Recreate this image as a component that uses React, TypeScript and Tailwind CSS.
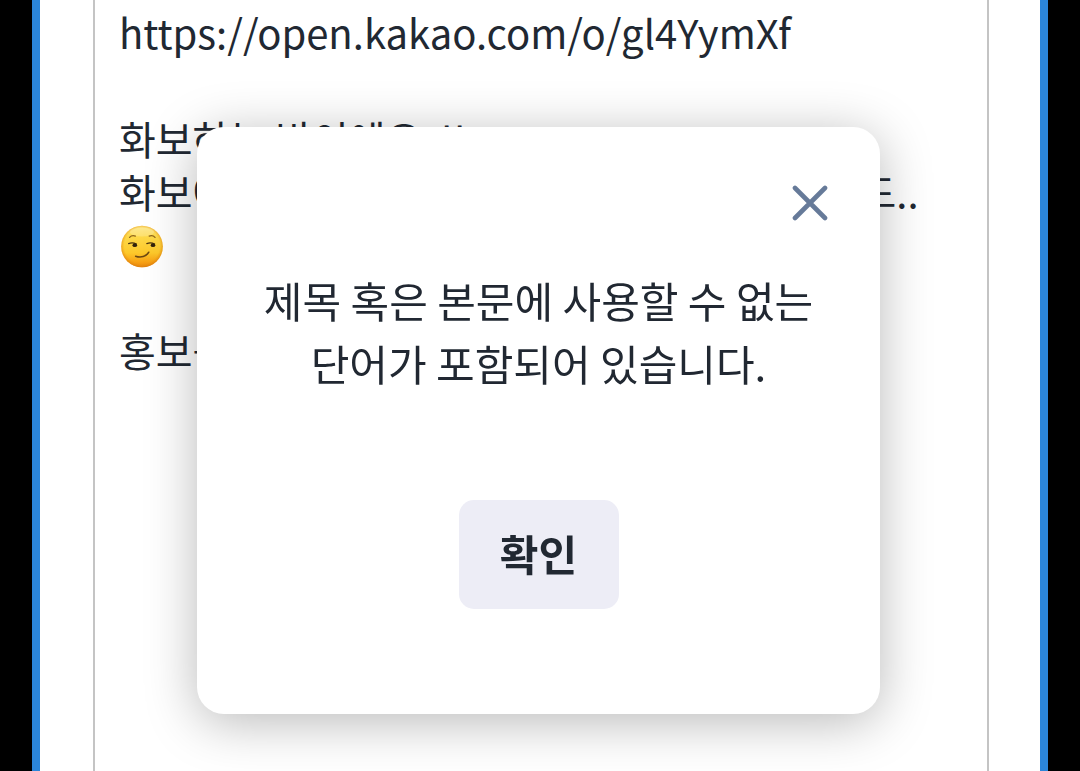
import { useState } from "react";

const SmirkEmoji = () => (
  <svg
    viewBox="0 0 42 43"
    role="img"
    aria-label="smirking face"
    className="inline-block w-[42px] h-[43px] ml-0.5 mt-[7px] align-top"
  >
    <defs>
      <linearGradient id="face" x1="0" y1="0" x2="0" y2="1">
        <stop offset="0" stopColor="#fde57c" />
        <stop offset="0.25" stopColor="#fdd94a" />
        <stop offset="0.65" stopColor="#fdc92b" />
        <stop offset="0.88" stopColor="#f7a014" />
        <stop offset="1" stopColor="#e8860e" />
      </linearGradient>
      <radialGradient id="edge" cx="0.5" cy="0.48" r="0.53">
        <stop offset="0.8" stopColor="#ee9a12" stopOpacity="0" />
        <stop offset="1" stopColor="#d9780a" stopOpacity="0.8" />
      </radialGradient>
    </defs>
    <circle cx="21" cy="21.5" r="20.8" fill="url(#face)" />
    <circle cx="21" cy="21.5" r="20.8" fill="url(#edge)" />
    <ellipse cx="21" cy="7" rx="12" ry="4.5" fill="#fff" opacity="0.2" />
    <g fill="none" strokeLinecap="round">
      <path d="M8.6 12.4c1.5-1.7 3.6-2.1 5.8-1.3" stroke="#8d641c" strokeWidth="1.3" />
      <path d="M28.2 11.1c2.2-.8 4.3-.4 5.8 1.3" stroke="#8d641c" strokeWidth="1.3" />
      <path d="M7.6 18.6c2.6-1 5.4-.8 7.8.4" stroke="#4b3410" strokeWidth="1.2" />
      <path d="M25.8 18.6c2.6-1 5.4-.8 7.8.4" stroke="#4b3410" strokeWidth="1.2" />
      <path d="M14.6 31.2c5.2 1.9 10.7.4 13.2-4" stroke="#6b4812" strokeWidth="1.5" />
    </g>
    <ellipse cx="13.8" cy="20.2" rx="2.3" ry="1.9" fill="#33230c" />
    <ellipse cx="32" cy="20.2" rx="2.3" ry="1.9" fill="#33230c" />
  </svg>
);

const CloseIcon = () => (
  <svg viewBox="0 0 36 36" className="size-9" fill="none" aria-hidden="true">
    <path
      d="M3 3l30 30M33 3L3 33"
      stroke="#667a99"
      strokeWidth="4.6"
      strokeLinecap="round"
    />
  </svg>
);

const Editor = () => (
  <div
    role="textbox"
    aria-multiline="true"
    aria-label="본문"
    contentEditable
    suppressContentEditableWarning
    className="min-h-screen border-x-2 border-[#c4c4c4] px-6 pt-1.5 text-[40px] leading-[53px] whitespace-pre-wrap outline-none"
  >
    <p>https://open.kakao.com/o/gl4YymXf</p>
    <p>
      <br />
    </p>
    <p>화보하는 방이에요  !!</p>
    <p>화보에 나오는 모델들처럼 찍고싶은 분들... 코드..</p>
    <p className="h-[53px]">
      <SmirkEmoji />
    </p>
    <p>
      <br />
    </p>
    <p>홍보를</p>
  </div>
);

interface AlertDialogProps {
  onClose: () => void;
}

const AlertDialog = ({ onClose }: AlertDialogProps) => (
  <div className="fixed inset-0 flex items-start justify-center pt-[127px] pr-[3px]">
    <div
      role="alertdialog"
      aria-modal="true"
      aria-describedby="alert-message"
      className="flex w-full max-w-[683px] flex-col items-center rounded-[27px] bg-white px-[52px] pt-[58px] pb-[105px] shadow-[0_8px_52px_rgba(0,0,0,0.28)]"
    >
      <button
        type="button"
        aria-label="닫기"
        onClick={onClose}
        className="self-end cursor-pointer"
      >
        <CloseIcon />
      </button>
      <p
        id="alert-message"
        className="mt-[47px] text-center text-[42px] leading-[63px]"
      >
        제목 혹은 본문에 사용할 수 없는
        <br />
        단어가 포함되어 있습니다.
      </p>
      <button
        type="button"
        onClick={onClose}
        className="mt-[106px] min-w-[160px] rounded-[15px] bg-[#ededf6] px-10 pt-[21px] pb-[25px] text-[42px] leading-[63px] font-bold cursor-pointer"
      >
        확인
      </button>
    </div>
  </div>
);

export default function App() {
  const [alertOpen, setAlertOpen] = useState(true);

  return (
    <div className="h-screen overflow-hidden bg-black px-8 font-['Noto_Sans_CJK_JP','Noto_Sans_CJK_KR',sans-serif] text-[#212832]">
      <main className="min-h-screen border-x-8 border-[#2b85d9] bg-white pl-[53px] pr-[51px]">
        <Editor />
      </main>
      {alertOpen && <AlertDialog onClose={() => setAlertOpen(false)} />}
    </div>
  );
}
